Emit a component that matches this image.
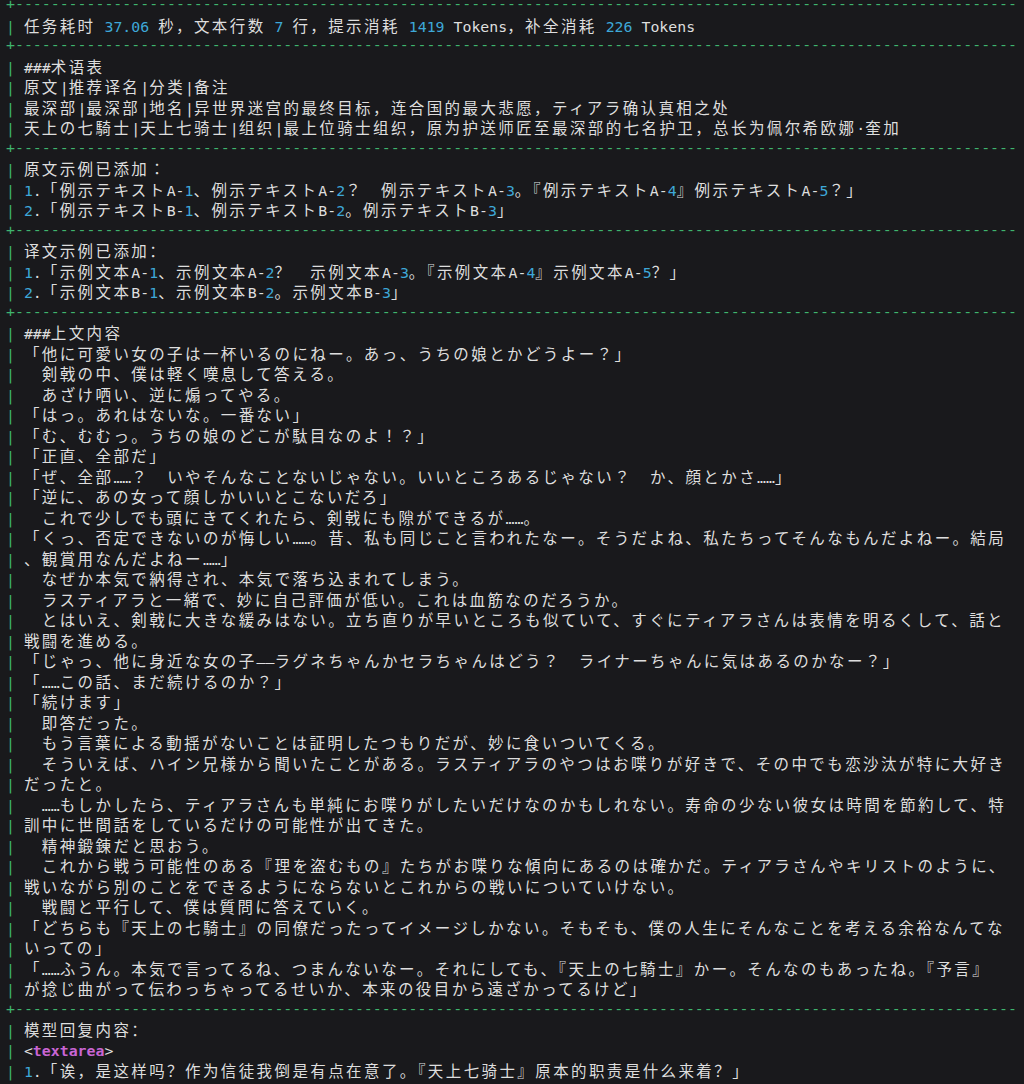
import type { ReactNode } from "react";

const WIDE = /[\u1100-\u115F\u2E80-\u303E\u3040-\uA4CF\uAC00-\uD7A3\uF900-\uFAFF\uFE30-\uFE4F\uFF00-\uFF60\uFFE0-\uFFE6]/;

const MONO = "[font-family:'DejaVu_Sans_Mono',monospace] text-[14.87px]";
const CJK = {
  sc: "[font-family:'Noto_Sans_CJK_SC',sans-serif] text-[15.5px] tracking-[2.4px]",
  jp: "[font-family:'Noto_Sans_CJK_JP',sans-serif] text-[15.5px] tracking-[2.4px]",
};

type Lang = keyof typeof CJK;

function runs(text: string) {
  const out: { wide: boolean; text: string }[] = [];
  for (const ch of text) {
    const wide = WIDE.test(ch);
    const last = out[out.length - 1];
    if (last && last.wide === wide) last.text += ch;
    else out.push({ wide, text: ch });
  }
  return out;
}

function Narrow({ text }: { text: string }) {
  const parts = text.split(/(\d+(?:\.\d+)?)/);
  return (
    <span className={MONO}>
      {parts.map((p, i) =>
        /^\d/.test(p) ? (
          <span key={i} className="text-[#3ea8d8]">
            {p}
          </span>
        ) : (
          p
        )
      )}
    </span>
  );
}

function Text({ text, lang }: { text: string; lang: Lang }) {
  return (
    <>
      {runs(text).map((r, i) =>
        r.wide ? (
          <span key={i} className={CJK[lang]}>
            {r.text}
          </span>
        ) : (
          <Narrow key={i} text={r.text} />
        )
      )}
    </>
  );
}

function Row({ children }: { children: ReactNode }) {
  return (
    <div className="h-[20.5px] leading-[20.5px] whitespace-pre overflow-visible">
      <span className={`${MONO} text-[#3fb46e]`}>|</span>
      <span className={MONO}> </span>
      {children}
    </div>
  );
}

function Separator() {
  return (
    <div className={`h-[20.5px] leading-[20.5px] whitespace-pre text-[#3fb46e] ${MONO}`}>
      {"+" + "-".repeat(112)}
    </div>
  );
}

const sections: { lang: Lang; lines: string[] }[] = [
  {
    lang: "sc",
    lines: ["任务耗时 37.06 秒，文本行数 7 行，提示消耗 1419 Tokens，补全消耗 226 Tokens"],
  },
  {
    lang: "sc",
    lines: [
      "###术语表",
      "原文|推荐译名|分类|备注",
      "最深部|最深部|地名|异世界迷宫的最终目标，连合国的最大悲愿，ティアラ确认真相之处",
      "天上の七騎士|天上七骑士|组织|最上位骑士组织，原为护送师匠至最深部的七名护卫，总长为佩尔希欧娜·奎加",
    ],
  },
  {
    lang: "jp",
    lines: [
      "原文示例已添加：",
      "1.「例示テキストA-1、例示テキストA-2？　例示テキストA-3。『例示テキストA-4』例示テキストA-5？」",
      "2.「例示テキストB-1、例示テキストB-2。例示テキストB-3」",
    ],
  },
  {
    lang: "sc",
    lines: [
      "译文示例已添加：",
      "1.「示例文本A-1、示例文本A-2？　示例文本A-3。『示例文本A-4』示例文本A-5？」",
      "2.「示例文本B-1、示例文本B-2。示例文本B-3」",
    ],
  },
  {
    lang: "jp",
    lines: [
      "###上文内容",
      "「他に可愛い女の子は一杯いるのにねー。あっ、うちの娘とかどうよー？」",
      "　剣戟の中、僕は軽く嘆息して答える。",
      "　あざけ哂い、逆に煽ってやる。",
      "「はっ。あれはないな。一番ない」",
      "「む、むむっ。うちの娘のどこが駄目なのよ！？」",
      "「正直、全部だ」",
      "「ぜ、全部……？　いやそんなことないじゃない。いいところあるじゃない？　か、顔とかさ……」",
      "「逆に、あの女って顔しかいいとこないだろ」",
      "　これで少しでも頭にきてくれたら、剣戟にも隙ができるが……。",
      "「くっ、否定できないのが悔しい……。昔、私も同じこと言われたなー。そうだよね、私たちってそんなもんだよねー。結局",
      "、観賞用なんだよねー……」",
      "　なぜか本気で納得され、本気で落ち込まれてしまう。",
      "　ラスティアラと一緒で、妙に自己評価が低い。これは血筋なのだろうか。",
      "　とはいえ、剣戟に大きな緩みはない。立ち直りが早いところも似ていて、すぐにティアラさんは表情を明るくして、話と",
      "戦闘を進める。",
      "「じゃっ、他に身近な女の子——ラグネちゃんかセラちゃんはどう？　ライナーちゃんに気はあるのかなー？」",
      "「……この話、まだ続けるのか？」",
      "「続けます」",
      "　即答だった。",
      "　もう言葉による動揺がないことは証明したつもりだが、妙に食いついてくる。",
      "　そういえば、ハイン兄様から聞いたことがある。ラスティアラのやつはお喋りが好きで、その中でも恋沙汰が特に大好き",
      "だったと。",
      "　……もしかしたら、ティアラさんも単純にお喋りがしたいだけなのかもしれない。寿命の少ない彼女は時間を節約して、特",
      "訓中に世間話をしているだけの可能性が出てきた。",
      "　精神鍛錬だと思おう。",
      "　これから戦う可能性のある『理を盗むもの』たちがお喋りな傾向にあるのは確かだ。ティアラさんやキリストのように、",
      "戦いながら別のことをできるようにならないとこれからの戦いについていけない。",
      "　戦闘と平行して、僕は質問に答えていく。",
      "「どちらも『天上の七騎士』の同僚だったってイメージしかない。そもそも、僕の人生にそんなことを考える余裕なんてな",
      "いっての」",
      "「……ふうん。本気で言ってるね、つまんないなー。それにしても、『天上の七騎士』かー。そんなのもあったね。『予言』",
      "が捻じ曲がって伝わっちゃってるせいか、本来の役目から遠ざかってるけど」",
    ],
  },
];

const reply = "1.「诶，是这样吗？作为信徒我倒是有点在意了。『天上七骑士』原本的职责是什么来着？」";

export default function App() {
  return (
    <div className="h-[1084px] overflow-hidden bg-[#19191c] text-[#dedede]">
      <div className="-mt-[6px] pl-[6px]">
        <Separator />
        {sections.map((s, i) => (
          <div key={i}>
            {s.lines.map((line, j) => (
              <Row key={j}>
                <Text text={line} lang={s.lang} />
              </Row>
            ))}
            <Separator />
          </div>
        ))}
        <Row>
          <Text text="模型回复内容：" lang="sc" />
        </Row>
        <Row>
          <span className={MONO}>
            {"<"}
            <span className="font-bold text-[#c865d3]">textarea</span>
            {">"}
          </span>
        </Row>
        <Row>
          <Text text={reply} lang="sc" />
        </Row>
      </div>
    </div>
  );
}
